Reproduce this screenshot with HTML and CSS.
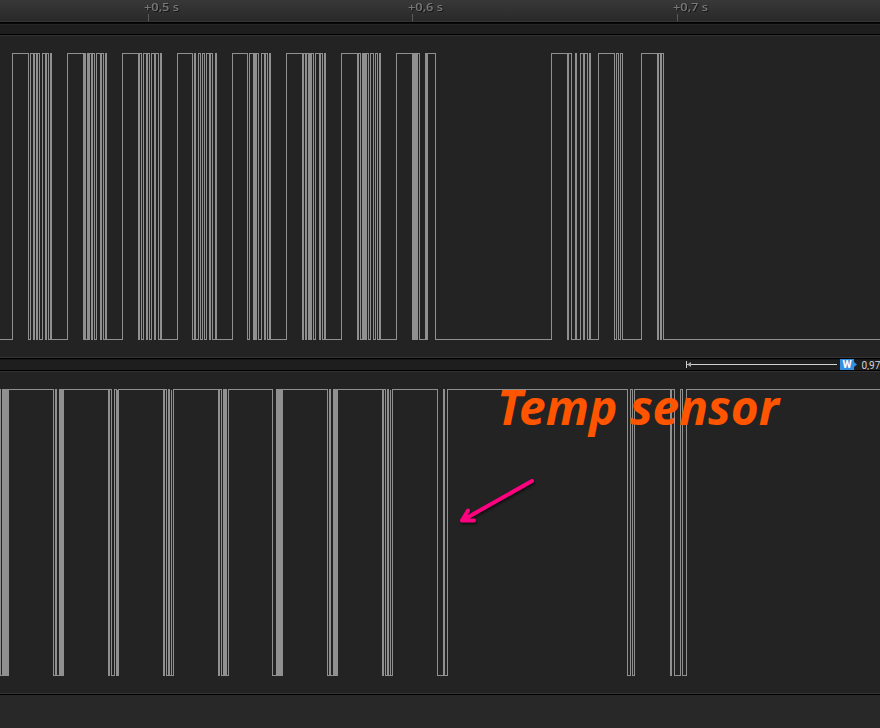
FILE: index.html
```html
<!DOCTYPE html>
<html lang="en">
<head>
<meta charset="utf-8">
<title>Logic capture</title>
<link rel="stylesheet" href="styles.css">
</head>
<body>
<main class="analyzer">
  <header>
    <svg class="ruler" width="880" height="21">
      <g class="ruler-labels">
        <text x="144" y="11" textLength="35" lengthAdjust="spacingAndGlyphs">+0,5 s</text>
        <text x="408" y="11" textLength="35" lengthAdjust="spacingAndGlyphs">+0,6 s</text>
        <text x="673" y="11" textLength="35" lengthAdjust="spacingAndGlyphs">+0,7 s</text>
      </g>
      <path class="ticks" d="M148.500 14V21M412.500 14V21M677.500 14V21"/>
    </svg>
  </header>
  <div class="strip strip-top"></div>
  <section class="channel">
    <svg class="wave" width="880" height="321"><path id="wave-0"/></svg>
  </section>
  <div class="strip strip-measure">
    <svg width="880" height="11">
      <path class="measure" d="M686.500 2V9M687 5.500H837"/>
      <path class="measure-head" d="M687 5.500L691 3V8Z"/>
      <path class="badge" d="M840 0H854V3L857 5.500L854 8V11H840Z"/>
      <text class="badge-text" x="842.500" y="9">W</text>
      <text class="measure-text" x="861.500" y="10">0,974</text>
    </svg>
  </div>
  <section class="channel">
    <svg class="wave" width="880" height="321"><path id="wave-1"/></svg>
  </section>
  <footer></footer>
  <svg class="notes" width="880" height="728">
    <text class="note" x="497" y="425" textLength="282" lengthAdjust="spacingAndGlyphs">Temp sensor</text>
    <path class="arrow" d="M532 481L462 520.500M468 510.500L462 520.500L474 520.500"/>
  </svg>
</main>
<script src="waves.js"></script>
</body>
</html>
```
FILE: styles.css
```css
body {
  margin: 0;
  background: #282828;
}

.analyzer {
  position: relative;
  display: flex;
  flex-direction: column;
  width: 880px;
  height: 728px;
  overflow: hidden;
}

svg {
  display: block;
}

header {
  height: 21px;
  background: linear-gradient(#383838, #292929);
  border-bottom: 1px solid #353535;
}

.ruler-labels {
  font: 600 11.500px "Open Sans", sans-serif;
  fill: #777;
  filter: drop-shadow(1px 1px 0 #181818);
}

.ticks {
  stroke: #5a5a5a;
}

.strip {
  box-sizing: border-box;
  background: #1e1e1e;
  border-bottom: 1px solid #000;
}

.strip-top {
  height: 13px;
  border-top: 1px solid #000;
  box-shadow: inset 0 1px #080808, inset 0 2px #252525;
}

.strip-measure {
  height: 13px;
  border-top: 1px solid #000;
  box-shadow: inset 0 1px #161616;
}

.channel {
  box-sizing: border-box;
  height: 323px;
  background: #232323;
  border-top: 1px solid #313131;
  border-bottom: 1px solid #343434;
}

.wave path {
  fill: none;
  stroke: #909090;
  stroke-width: 1;
  shape-rendering: crispEdges;
}

.measure {
  fill: none;
  stroke: #d2d2d2;
}

.measure-head {
  fill: #aaa;
}

.badge {
  fill: #338fe2;
}

.badge-text {
  font: bold 10.500px Roboto, sans-serif;
  fill: #fff;
}

.measure-text {
  font: 10px Roboto, sans-serif;
  fill: #d6d6d6;
}

footer {
  flex: 1;
  background: #282828;
  border-top: 1px solid #000;
}

.notes {
  position: absolute;
  inset: 0;
}

.note {
  font: italic bold 48px "Noto Sans", "Open Sans", sans-serif;
  fill: #ff5500;
}

.arrow {
  fill: none;
  stroke: #ff0080;
  stroke-width: 4;
  stroke-linecap: round;
  stroke-linejoin: round;
  filter: drop-shadow(1.500px 2px 1px #111);
}
```
FILE: waves.js
```javascript
// Each list holds the x positions at which the signal toggles.
const channels = [
  { id: "wave-0", high: false, top: 17.5, bottom: 303.5, edges: [
    12, 28, 30, 33, 34, 36, 37, 39, 42, 45, 46, 48, 50, 51,
    67, 83, 84, 85, 87, 88, 89, 91, 92, 94, 96, 100, 101, 103, 105, 106,
    122, 138, 139, 141, 143, 146, 147, 149, 151, 154, 155, 158, 160, 161,
    177, 192, 194, 195, 198, 200, 202, 204, 206, 209, 210, 212, 215, 216,
    232, 247, 249, 253, 254, 255, 256, 258, 261, 264, 265, 267, 269, 270,
    286, 302, 303, 305, 306, 308, 309, 310, 311, 313, 315, 319, 320, 322, 324, 325,
    341, 357, 358, 360, 362, 363, 364, 365, 366, 368, 370, 373, 375, 377, 379, 380,
    396, 412, 413, 414, 415, 416, 417, 419, 425, 426, 427, 435,
    551, 567, 568, 571, 575, 576, 580, 583, 584, 587, 589, 590,
    598, 614, 616, 618, 620, 622, 641, 657, 658, 660, 661, 663] },
  { id: "wave-1", high: true, top: 17.5, bottom: 303.5, edges: [
    0, 2, 3, 4, 5, 6, 7, 8,
    53, 55, 56, 59, 60, 61, 62, 63,
    108, 109, 111, 114, 116, 117, 117, 118,
    163, 164, 166, 168, 169, 171, 171, 173,
    218, 219, 221, 223, 224, 225, 226, 228,
    272, 276, 277, 278, 279, 280, 281, 282,
    327, 329, 330, 333, 334, 335, 336, 337,
    382, 383, 385, 387, 388, 390, 390, 392,
    437, 443, 444, 447,
    627, 630, 632, 634, 670, 671, 674, 680, 682, 686] }
];

for (const channel of channels) {
  let high = channel.high;
  let d = `M-1 ${high ? channel.top : channel.bottom}`;
  for (const x of channel.edges) {
    high = !high;
    d += `H${x + 0.5}V${high ? channel.top : channel.bottom}`;
  }
  document.getElementById(channel.id).setAttribute("d", d + "H881");
}
```
